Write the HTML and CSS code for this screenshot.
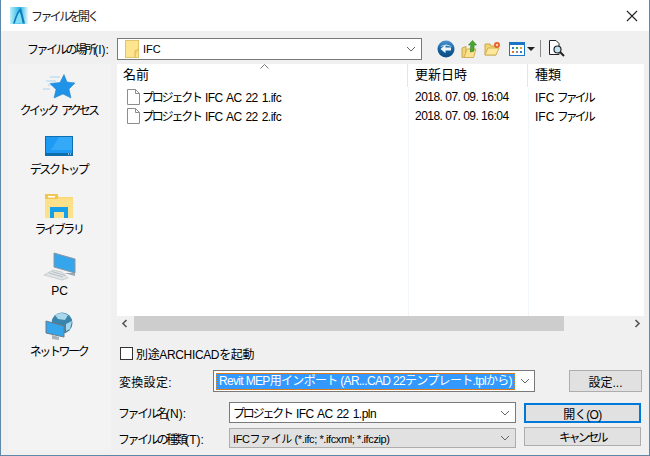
FILE: index.html
```html
<!DOCTYPE html>
<html lang="ja">
<head>
<meta charset="utf-8">
<title>ファイルを開く</title>
<link rel="stylesheet" href="styles.css">
</head>
<body>
<div class="window">
  <header class="titlebar">
    <svg class="app-icon" width="18" height="17" viewBox="0 0 18 17"><defs><linearGradient id="ai" x1="0" y1="0" x2="1" y2="0"><stop offset="0" stop-color="#bfeefa"/><stop offset=".55" stop-color="#23b4e4"/><stop offset="1" stop-color="#e9f7fc"/></linearGradient></defs><rect x="0" y="0" width="18" height="17" fill="url(#ai)"/><path d="M3 16.5 Q7 3 11 1 L15 16.5 H12.5 Q11 8 9.5 5 Q7 9 5 16.5 Z" fill="#0d7fc0"/><path d="M9.5 5 Q11 8 12.5 16.5 H5 Q7 9 9.5 5Z" fill="#7fdcf2"/></svg>
    <span class="title">ファイルを開く</span>
    <svg class="close" width="12" height="12" viewBox="0 0 12 12"><path d="M1 1 L11 11 M11 1 L1 11" stroke="#222" stroke-width="1.1" fill="none"/></svg>
  </header>
  <div class="location-row">
    <label class="loc-label">ファイルの場所<span class="latin">(I):</span></label>
    <div class="combo loc-combo">
      <svg class="folder" width="14" height="18" viewBox="0 0 14 18"><rect x="0.5" y="0.5" width="13" height="17" fill="#fde48f" stroke="#e3c46a"/><path d="M10 17.5 V11 L13.5 9" fill="#f4d06e" stroke="#d9b95c"/></svg>
      <span class="loc-text">IFC</span>
      <svg class="chev" width="10" height="6" viewBox="0 0 10 6"><path d="M1 1 L5 5 L9 1" fill="none" stroke="#666"/></svg>
    </div>
    <div class="toolbar">
      <svg width="18" height="18" viewBox="0 0 18 18"><defs><linearGradient id="bk" x1="0" y1="0" x2="0" y2="1"><stop offset="0" stop-color="#4f95cf"/><stop offset=".5" stop-color="#15629f"/><stop offset="1" stop-color="#0a4c85"/></linearGradient></defs><circle cx="9" cy="9" r="8.5" fill="url(#bk)"/><path d="M3 7 a7 5 0 0 1 12 0 Q9 5 3 7 Z" fill="#a5cfec"/><path d="M3.5 9 L8.5 4.8 V7.5 H14 V10.5 H8.5 V13.2 Z" fill="#eef6fc"/></svg>
      <svg width="17" height="18" viewBox="0 0 17 18"><path d="M1 8 L5 6.5 V17 L1 17.5 Z" fill="#f3d473" stroke="#c9a94f"/><path d="M3 17.5 L6 9 H15 L12.5 17.5 Z" fill="#fbe38f" stroke="#d1b15a"/><path d="M9.5 12 Q9 8 10 5 H7.5 L11.5 .5 L15.5 5 H13 V11 Z" fill="#4aa82f" stroke="#2a7a1c" stroke-width=".6"/></svg>
      <svg width="17" height="15" viewBox="0 0 17 15"><path d="M1 3 H6 L7 5 H12 V14 H1 Z" fill="#f3d473" stroke="#c9a94f"/><path d="M1 14 L4 7 H15 L12 14 Z" fill="#fde89a" stroke="#d1b15a"/><circle cx="13" cy="4" r="3" fill="#e8602c"/><circle cx="13" cy="4" r="1.2" fill="#ffd9a0"/></svg>
      <span class="view-btn">
        <svg width="16" height="14" viewBox="0 0 16 14"><rect x=".5" y=".5" width="15" height="13" fill="#fff" stroke="#1e74c6"/><rect x="1" y="1" width="14" height="2" fill="#1e74c6"/><g><rect x="3" y="5" width="2" height="2" fill="#2f7fd0"/><rect x="7" y="5" width="2" height="2" fill="#3aa04a"/><rect x="11" y="5" width="2" height="2" fill="#e2a52c"/><rect x="3" y="9" width="2" height="2" fill="#e2703a"/><rect x="7" y="9" width="2" height="2" fill="#8a8a8a"/><rect x="11" y="9" width="2" height="2" fill="#2f7fd0"/></g></svg>
        <i class="caret"></i>
      </span>
      <i class="tool-sep"></i>
      <svg class="preview" width="17" height="17" viewBox="0 0 17 17"><path d="M1.5 .5 H8 L11 3.5 V14.5 H1.5 Z" fill="#fff" stroke="#222"/><circle cx="9.5" cy="9.5" r="3.5" fill="#c4e4f4" stroke="#222" stroke-width="1.2"/><path d="M12 12 L16 16" stroke="#222" stroke-width="2"/></svg>
    </div>
  </div>
  <div class="main">
    <nav class="places">
      <div class="place place-quick">
        <svg width="32" height="25" viewBox="0 0 32 25"><path d="M7 3 H17 M3 7 H13 M5 11 H10 M0 15 H7" stroke="#a9d4f2" stroke-width="1"/><path d="M21 .5 L24 8 L32 9 L26 15 L28 24 L20 20 L11 24 L13 15.5 L7 9.5 L17 8.5 Z" fill="#1f93e8" stroke="#1a7cc8" stroke-width=".5"/></svg>
        <span>クイック アクセス</span>
      </div>
      <div class="place place-desk">
        <svg width="28" height="20" viewBox="0 0 28 20"><rect x=".5" y=".5" width="27" height="19" fill="#1d9bf4" stroke="#0f6fae"/><path d="M14 1 H27 V14 H6 Z" fill="#45b2f8" opacity=".6"/><rect x="1" y="17" width="26" height="2" fill="#0d6cab"/><path d="M23 18 H26" stroke="#fff" stroke-dasharray="1 1"/></svg>
        <span>デスクトップ</span>
      </div>
      <div class="place place-lib">
        <svg width="28" height="24" viewBox="0 0 28 24"><path d="M0 0 H12 L14 3 H28 V24 H0 Z" fill="#fbd97d"/><rect x="0" y="0" width="13" height="5" fill="#f0c655"/><rect x="3" y="2" width="7" height="1.5" fill="#fff"/><rect x="0" y="5" width="28" height="19" fill="#fde08a"/><path d="M5 24 V13 H23 V24 H19 V18 H9 V24 Z" fill="#16a0e8"/></svg>
        <span>ライブラリ</span>
      </div>
      <div class="place place-pc">
        <svg width="32" height="30" viewBox="0 0 32 30"><path d="M10 1 L31 7 V21 L10 15 Z" fill="#35a5ec" stroke="#8a97a0"/><path d="M31 21 V24 L20 21 Z" fill="#9aa6ad"/><path d="M9 18 L18 20 L24 26 L18 28 L0 23 Z" fill="#dfe4e7" stroke="#b6bec4" stroke-width=".6"/><path d="M5 21 L19 25 M8 19.5 L21 23.5" stroke="#a7b0b6" stroke-width=".7"/></svg>
        <span>PC</span>
      </div>
      <div class="place place-net">
        <svg width="28" height="29" viewBox="0 0 28 29"><circle cx="17" cy="11" r="10.5" fill="#3a85ad"/><path d="M10 3 Q16 -1 23 3 L20 8 L13 7 Z M21 12 L27 9 L25 17 L21 19Z" fill="#a8d6ea"/><path d="M1 9 L19 14 V25 L1 21 Z" fill="#35a5ec" stroke="#6d7b85"/><path d="M7 23 L14 25 V28 L7 27Z" fill="#aab3b9"/></svg>
        <span>ネットワーク</span>
      </div>
    </nav>
    <div class="content">
      <section class="list">
        <div class="list-head">
          <span class="col col-name">名前<svg class="sort" width="9" height="5" viewBox="0 0 9 5"><path d="M.5 4.5 L4.5 .5 L8.5 4.5" fill="none" stroke="#777"/></svg></span>
          <span class="col col-date">更新日時</span>
          <span class="col col-type">種類</span>
        </div>
        <div class="list-body">
          <div class="file">
            <span class="col-name file-name"><svg width="13" height="16" viewBox="0 0 13 16"><path d="M.5 .5 H8.5 L12.5 4.5 V15.5 H.5 Z M8.5 .5 V4.5 H12.5" fill="#fff" stroke="#8d8d8d"/></svg><span>プロジェクト <span class="latin">IFC AC 22 1.ifc</span></span></span>
            <span class="col-date">2018. 07. 09. 16:04</span>
            <span class="col-type"><span class="latin">IFC</span> ファイル</span>
          </div>
          <div class="file">
            <span class="col-name file-name"><svg width="13" height="16" viewBox="0 0 13 16"><path d="M.5 .5 H8.5 L12.5 4.5 V15.5 H.5 Z M8.5 .5 V4.5 H12.5" fill="#fff" stroke="#8d8d8d"/></svg><span>プロジェクト <span class="latin">IFC AC 22 2.ifc</span></span></span>
            <span class="col-date">2018. 07. 09. 16:04</span>
            <span class="col-type"><span class="latin">IFC</span> ファイル</span>
          </div>
        </div>
        <div class="scrollbar">
          <svg width="7" height="9" viewBox="0 0 7 9"><path d="M5.5 1 L2 4.5 L5.5 8" fill="none" stroke="#555" stroke-width="1.6"/></svg>
          <div class="track"><div class="thumb"></div></div>
          <svg width="7" height="9" viewBox="0 0 7 9"><path d="M1.5 1 L5 4.5 L1.5 8" fill="none" stroke="#555" stroke-width="1.6"/></svg>
        </div>
      </section>
      <div class="check-row"><i class="checkbox"></i><span>別途ARCHICADを起動</span></div>
      <div class="convert-row">
        <span class="convert-label">変換設定:</span>
        <div class="combo convert-combo">
          <span class="selected">Revit MEP用インポート (AR...CAD 22テンプレート.tplから)</span>
          <svg class="chev" width="10" height="6" viewBox="0 0 10 6"><path d="M1 1 L5 5 L9 1" fill="none" stroke="#666"/></svg>
        </div>
        <button class="btn btn-settings">設定...</button>
      </div>
      <div class="form-grid">
        <span class="form-label">ファイル名<span class="latin">(N):</span></span>
        <div class="combo name-combo"><span class="name-text">プロジェクト <span class="latin">IFC AC 22 1.pln</span></span><svg class="chev" width="10" height="6" viewBox="0 0 10 6"><path d="M1 1 L5 5 L9 1" fill="none" stroke="#666"/></svg></div>
        <button class="btn btn-open">開く(O)</button>
        <span class="form-label">ファイルの種類<span class="latin">(T):</span></span>
        <div class="combo type-combo"><span>IFCファイル (*.ifc; *.ifcxml; *.ifczip)</span><svg class="chev" width="10" height="6" viewBox="0 0 10 6"><path d="M1 1 L5 5 L9 1" fill="none" stroke="#666"/></svg></div>
        <button class="btn btn-cancel">キャンセル</button>
      </div>
    </div>
  </div>
</div>
</body>
</html>
```
FILE: styles.css
```css
* { box-sizing: border-box; }
html, body { margin: 0; padding: 0; }
body { width: 650px; height: 456px; overflow: hidden; font-family: "Liberation Sans", "Noto Sans CJK JP", sans-serif; font-size: 12px; color: #000; }
.latin { letter-spacing: 0; word-spacing: 0; }
.window { width: 650px; height: 456px; background: #f0f0f0; border: 1px solid #5f88a8; border-top: 0; display: flex; flex-direction: column; }
.titlebar { height: 31px; background: #fff; display: flex; align-items: center; padding: 0 11px 0 9px; flex: none; }
.app-icon { margin-right: 3px; }
.title { flex: 1; font-size: 12px; letter-spacing: -2.6px; color: #222; }
.location-row { height: 33px; display: flex; align-items: center; flex: none; padding-top: 2px; }
.loc-label { width: 116px; padding-left: 26px; font-size: 12px; letter-spacing: -2.4px; white-space: nowrap; }
.combo { background: #fff; border: 1px solid #7a7a7a; display: flex; align-items: center; position: relative; }
.loc-combo { width: 305px; height: 22px; padding-left: 7px; }
.loc-text { margin-left: 4px; flex: 1; font-size: 11px; }
.chev { flex: none; margin-right: 5px; }
.toolbar { display: flex; align-items: center; margin-left: 15px; gap: 6px; }
.view-btn { display: flex; align-items: center; gap: 2px; margin-left: 2px; }
.caret { width: 0; height: 0; border: 4px solid transparent; border-top: 4px solid #222; border-bottom: 0; }
.tool-sep { width: 1px; height: 17px; background: #8a8a8a; margin-left: -1px; }
.preview { margin-left: 1px; }
.main { flex: 1; display: flex; min-height: 0; padding-left: 7px; }
.places { width: 103px; background: #f3f3f3; display: flex; flex-direction: column; align-items: center; margin-bottom: 5px; flex: none; }
.place { display: flex; flex-direction: column; align-items: center; letter-spacing: -2.4px; white-space: nowrap; }
.place span { line-height: 17px; margin-left: -2px; }
.place-quick { padding-top: 10px; height: 71px; }
.place-quick svg { margin-bottom: 4px; }
.place-quick span { letter-spacing: -2.8px; word-spacing: 4px; }
.place-desk { height: 59px; padding-top: 1px; }
.place-desk svg { margin-bottom: 6px; }
.place-lib { height: 58px; }
.place-lib svg { margin-bottom: 4px; }
.place-pc { height: 60px; }
.place-pc svg { margin-bottom: 1px; }
.place-pc span { letter-spacing: 0; margin-left: 0; }
.place-net svg { margin-bottom: 3px; }
.content { flex: 1; margin-left: 6px; min-width: 0; padding-right: 5px; display: flex; flex-direction: column; }
.list { height: 267px; background: #fff; flex: none; display: flex; flex-direction: column; position: relative; }
.list-head { height: 23px; display: flex; align-items: center; flex: none; font-size: 13px; }
.col-name { width: 291px; padding-left: 6px; position: relative; flex: none; }
.col-date { width: 120px; padding-left: 7px; flex: none; }
.col-type { flex: 1; padding-left: 7px; }
.list-head .col { height: 23px; line-height: 22px; border-right: 1px solid #e5e5e5; }
.list-head .col-type { border-right: 0; }
.sort { position: absolute; left: 143px; top: 0; }
.list-body { flex: 1; display: flex; flex-direction: column; background: linear-gradient(#f1f6fb, #f1f6fb) 291px 0 / 1px 100% no-repeat, linear-gradient(#f1f6fb, #f1f6fb) 411px 0 / 1px 100% no-repeat, #fff; }
.file { height: 19px; display: flex; align-items: center; font-size: 12px; white-space: nowrap; }
.file-name { display: flex; align-items: center; gap: 2px; padding-left: 10px; letter-spacing: -2.2px; word-spacing: 3px; }
.file-name .latin { letter-spacing: -.5px; word-spacing: 1px; }
.file .col-date { letter-spacing: -.52px; }
.file .col-type { letter-spacing: -3px; word-spacing: 2px; }
.scrollbar { height: 15px; display: flex; align-items: center; background: #f0f0f0; flex: none; padding: 0 3px 0 4px; gap: 6px; }
.track { flex: 1; height: 15px; }
.thumb { width: 430px; height: 15px; background: #cdcdcd; }
.check-row { height: 22px; margin-top: 11px; display: flex; align-items: center; padding-left: 3px; gap: 3px; letter-spacing: -.35px; flex: none; }
.checkbox { width: 13px; height: 13px; border: 1px solid #333; background: #fff; display: block; }
.convert-row { height: 22px; margin-top: 6px; display: flex; align-items: center; flex: none; }
.convert-label { width: 96px; padding-left: 2px; letter-spacing: .3px; font-size: 12px; }
.convert-combo { width: 322px; height: 22px; padding: 2px; }
.selected { flex: none; width: 299px; background: #3399ff; color: #fff; outline: 1px dotted #e08020; outline-offset: -1px; font-size: 12px; height: 17px; line-height: 16px; padding-left: 3px; white-space: nowrap; letter-spacing: -.67px; }
.convert-combo .chev { margin-left: auto; margin-right: 2px; }
.btn { font: inherit; background: #e1e1e1; border: 1px solid #adadad; padding: 0; color: #000; }
.btn-settings { width: 73px; height: 22px; margin-left: 34px; }
.form-grid { display: grid; grid-template-columns: 112px 295px 117px; grid-template-rows: 21px 20px; row-gap: 5px; margin-top: 10px; align-items: center; }
.form-label { font-size: 12px; letter-spacing: -2.4px; white-space: nowrap; margin-left: 1px; }
.name-combo, .type-combo { width: 287px; justify-content: space-between; padding-left: 3px; white-space: nowrap; }
.name-combo { height: 21px; }
.name-text { letter-spacing: -2.2px; word-spacing: 3px; }
.name-text .latin { letter-spacing: -.5px; word-spacing: 1px; }
.type-combo { height: 20px; background: #e1e1e1; border-color: #adadad; font-size: 11px; letter-spacing: -.4px; }
.btn-open { height: 20px; width: 117px; border: 2px solid #0078d7; letter-spacing: -.6px; }
.btn-cancel { height: 19px; width: 117px; letter-spacing: -2.6px; align-self: start; margin-top: -1px; }
```
